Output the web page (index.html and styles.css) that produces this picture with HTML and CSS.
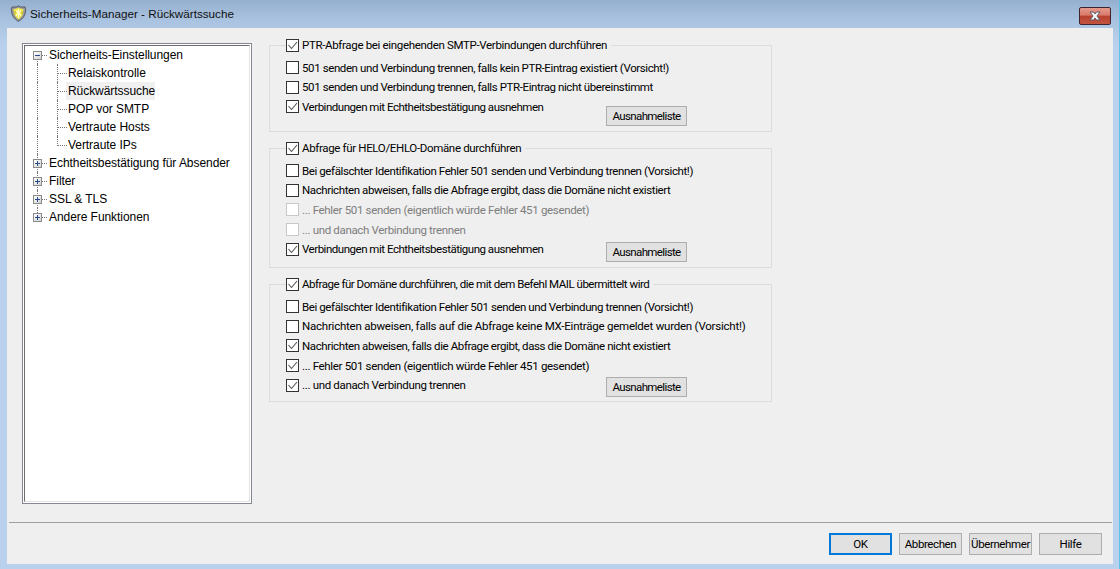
FILE: index.html
```html
<!DOCTYPE html>
<html lang="de">
<head>
<meta charset="utf-8">
<title>Sicherheits-Manager - Rückwärtssuche</title>
<link rel="stylesheet" href="styles.css">
</head>
<body>
<div class="window">
  <header class="titlebar">
    <svg class="shield" width="17" height="17" viewBox="0 0 17 17"><path d="M8.5 .8 L10.5 2 L15 2 L15.6 3.5 C15.8 9.5 13.5 13.5 8.5 16.4 C3.5 13.5 1.2 9.5 1.4 3.5 L2 2 L6.5 2 Z" fill="#9c9c96" stroke="#4d4d5c" stroke-width=".9"/><path d="M8.5 3 L13.4 4.2 C13.4 9 11.8 12 8.5 14.3 C5.2 12 3.6 9 3.6 4.2 Z" fill="#f2ea4a"/><path d="M6 5.5 L11 10.5 M11 5.5 L6 10.5 M8.5 4 V13" stroke="#fffbd0" stroke-width="1.2" fill="none"/><path d="M5 6 V9 M12 6 V9" stroke="#b9a92c" stroke-width="1" fill="none"/></svg>
    <span class="title">Sicherheits-Manager - Rückwärtssuche</span>
    <button class="close" aria-label="Schließen"><svg width="16" height="10" viewBox="0 0 16 10"><path d="M3 1 H6.5 L8 3 L9.5 1 H13 L10 5 L13 9 H9.5 L8 7 L6.5 9 H3 L6 5 Z" fill="#f4f4f4" stroke="#5c5a66" stroke-width="1"/></svg></button>
  </header>
  <main class="client">
    <div class="panes">
      <nav class="tree">
        <ul class="tree-list">
          <li class="node open"><span class="box"></span><span class="label">Sicherheits-Einstellungen</span></li>
          <li class="child"><span class="label">Relaiskontrolle</span></li>
          <li class="child"><span class="label selected">Rückwärtssuche</span></li>
          <li class="child"><span class="label">POP vor SMTP</span></li>
          <li class="child"><span class="label">Vertraute Hosts</span></li>
          <li class="child last"><span class="label">Vertraute IPs</span></li>
          <li class="node"><span class="box"></span><span class="label">Echtheitsbestätigung für Absender</span></li>
          <li class="node"><span class="box"></span><span class="label">Filter</span></li>
          <li class="node"><span class="box"></span><span class="label">SSL &amp; TLS</span></li>
          <li class="node end"><span class="box"></span><span class="label">Andere Funktionen</span></li>
        </ul>
      </nav>
      <section class="settings">
        <div class="group g1">
          <label class="legend loose"><span class="cb on"></span>PTR-Abfrage bei eingehenden SMTP-Verbindungen durchführen</label>
          <label class="row"><span class="cb"></span>501 senden und Verbindung trennen, falls kein PTR-Eintrag existiert (Vorsicht!)</label>
          <label class="row"><span class="cb"></span>501 senden und Verbindung trennen, falls PTR-Eintrag nicht übereinstimmt</label>
          <div class="row split"><label class="inline tight"><span class="cb on"></span>Verbindungen mit Echtheitsbestätigung ausnehmen</label><button class="btn list">Ausnahmeliste</button></div>
        </div>
        <div class="group g2">
          <label class="legend"><span class="cb on"></span>Abfrage für HELO/EHLO-Domäne durchführen</label>
          <label class="row"><span class="cb"></span>Bei gefälschter Identifikation Fehler 501 senden und Verbindung trennen (Vorsicht!)</label>
          <label class="row"><span class="cb"></span>Nachrichten abweisen, falls die Abfrage ergibt, dass die Domäne nicht existiert</label>
          <label class="row off"><span class="cb"></span>... Fehler 501 senden (eigentlich würde Fehler 451 gesendet)</label>
          <label class="row off"><span class="cb"></span>... und danach Verbindung trennen</label>
          <div class="row split"><label class="inline tight"><span class="cb on"></span>Verbindungen mit Echtheitsbestätigung ausnehmen</label><button class="btn list">Ausnahmeliste</button></div>
        </div>
        <div class="group g3">
          <label class="legend tight"><span class="cb on"></span>Abfrage für Domäne durchführen, die mit dem Befehl MAIL übermittelt wird</label>
          <label class="row"><span class="cb"></span>Bei gefälschter Identifikation Fehler 501 senden und Verbindung trennen (Vorsicht!)</label>
          <label class="row wide"><span class="cb"></span>Nachrichten abweisen, falls auf die Abfrage keine MX-Einträge gemeldet wurden (Vorsicht!)</label>
          <label class="row"><span class="cb on"></span>Nachrichten abweisen, falls die Abfrage ergibt, dass die Domäne nicht existiert</label>
          <label class="row loose"><span class="cb on"></span>... Fehler 501 senden (eigentlich würde Fehler 451 gesendet)</label>
          <div class="row split"><label class="inline loose"><span class="cb on"></span>... und danach Verbindung trennen</label><button class="btn list">Ausnahmeliste</button></div>
        </div>
      </section>
    </div>
    <footer class="footer">
      <button class="btn foot default">OK</button>
      <button class="btn foot">Abbrechen</button>
      <button class="btn foot">Übernehmer</button>
      <button class="btn foot">Hilfe</button>
    </footer>
  </main>
</div>
</body>
</html>
```

FILE: styles.css
```css
* { box-sizing: border-box; }
html, body { margin: 0; padding: 0; }
body { width: 1120px; height: 569px; overflow: hidden; font-family: Roboto, "Liberation Sans", Arial, sans-serif; font-size: 11.5px; letter-spacing: -0.4px; color: #000; }
.window { width: 1120px; height: 569px; display: flex; flex-direction: column; padding: 0 6px 5px 7px; background: linear-gradient(180deg, #95b0cf 0, #a9c2df 20px, #b9d1ec 45px, #b9d1ec 100%); border-right: 1px solid #5fc4e4; }
.titlebar { height: 28px; flex: none; display: flex; align-items: center; gap: 4px; padding: 0 0 1px 3px; }
.shield { flex: none; }
.title { font-family: "Liberation Sans", Arial, sans-serif; font-size: 11.7px; letter-spacing: 0; color: #111; margin-left: -1px; }
.close { margin-left: auto; margin-right: 2px; width: 32px; height: 18px; align-self: flex-start; margin-top: 7px; padding: 0; border: 1px solid #3f2430; border-radius: 2px; background: linear-gradient(180deg, #e49a8c 0, #d9796b 45%, #b8402e 50%, #c3543f 100%); display: flex; align-items: center; justify-content: center; }
.client { flex: 1; background: #efefef; display: flex; flex-direction: column; min-height: 0; }
.panes { height: 495px; flex: none; display: flex; border-bottom: 1px solid #a0a0a0; margin: 0 1px 0 2px; padding: 15px 0 0 13px; }
.tree { width: 230px; height: 461px; flex: none; background: #fff; border: 1px solid #828790; padding: 1px; position: relative; }
.tree::before { content: ""; position: absolute; inset: 1px; border: 1px solid; border-color: #6e6e6e #e3e3e3 #e3e3e3 #6e6e6e; pointer-events: none; }
.tree-list { list-style: none; margin: 0; padding: 1px 0 0 0; font-family: "Liberation Sans", Arial, sans-serif; font-size: 12px; letter-spacing: -0.06px; }
.node, .child { height: 18px; display: flex; align-items: center; position: relative; white-space: nowrap; }
.node { padding-left: 9px; }
.node::before { content: ""; position: absolute; left: 13px; top: 0; bottom: 0; border-left: 1px dotted #777; }
.node.open::before { top: 9px; bottom: 0; }
.node.end::before { bottom: 9px; }
.node::after { content: ""; position: absolute; left: 13px; top: 9px; width: 10px; border-top: 1px dotted #777; }
.box { width: 9px; height: 9px; flex: none; position: relative; z-index: 1; border: 1px solid #8a8a8a; background: linear-gradient(135deg, #fff, #d4d4d4); }
.box::before { content: ""; position: absolute; left: 1px; top: 3px; width: 5px; height: 1px; background: #2b4a8c; }
.node:not(.open) .box::after { content: ""; position: absolute; left: 3px; top: 1px; width: 1px; height: 5px; background: #2b4a8c; }
.node .label { margin-left: 6px; padding: 0 1px; }
.child { padding-left: 42px; }
.child::before { content: ""; position: absolute; left: 13px; top: 0; bottom: 0; border-left: 1px dotted #777; }
.child::after { content: ""; position: absolute; left: 33px; top: 0; height: 9px; width: 9px; border-bottom: 1px dotted #777; border-left: 1px dotted #777; }
.child:not(.last) .label::before { content: ""; position: absolute; left: 33px; top: 9px; bottom: 0; border-left: 1px dotted #777; }
.child .label { display: block; height: 18px; line-height: 18px; padding: 0 2px; }
.selected { background: #f0f0f0; width: 89px; }
.settings { width: 503px; margin-left: 17px; padding-top: 2px; display: flex; flex-direction: column; }
.group { border: 1px solid #dcdcdc; padding: 0 0 0 16px; position: relative; }
.g1 { height: 87px; }
.g2 { height: 120px; margin-top: 16px; }
.g3 { height: 118px; margin-top: 16px; }
.legend { display: flex; align-items: center; height: 20px; margin-top: -11px; white-space: nowrap; width: max-content; background: #efefef; padding-right: 4px; letter-spacing: -0.34px; }
.row { display: flex; align-items: center; height: 19.6px; white-space: nowrap; }
.legend + .row { margin-top: 3px; }
.inline { display: flex; align-items: center; }
.split { width: 401px; justify-content: space-between; }
.loose, .off { letter-spacing: -0.33px; }
.legend.tight, .tight { letter-spacing: -0.48px; }
.wide { letter-spacing: -0.23px; }
.cb { width: 13px; height: 13px; flex: none; margin-right: 3px; border: 1px solid #333; background: #fff; }
.cb.on { background: #fff url("data:image/svg+xml,%3Csvg xmlns='http://www.w3.org/2000/svg' width='11' height='11'%3E%3Cpath d='M1.5 5 L4.5 8.5 L10 2' fill='none' stroke='%23555' stroke-width='1.1'/%3E%3C/svg%3E") no-repeat 0 0; }
.off { color: #7d7d7d; }
.off .cb { border-color: #c8c8c8; }
.btn { font: inherit; letter-spacing: -0.4px; color: #000; background: #e1e1e1; border: 1px solid #adadad; padding: 0; }
.list { width: 81px; height: 20px; flex: none; letter-spacing: -0.62px; }
.g1 .list { margin-top: 18px; }
.g2 .list { margin-top: 6px; }
.g3 .list { margin-top: 4px; }
.footer { flex: 1; display: flex; justify-content: flex-end; gap: 7px; padding: 10px 11px 0 0; }
.foot { width: 63px; height: 22px; white-space: nowrap; overflow: hidden; }
.default { border: 2px solid #0078d7; }
```
